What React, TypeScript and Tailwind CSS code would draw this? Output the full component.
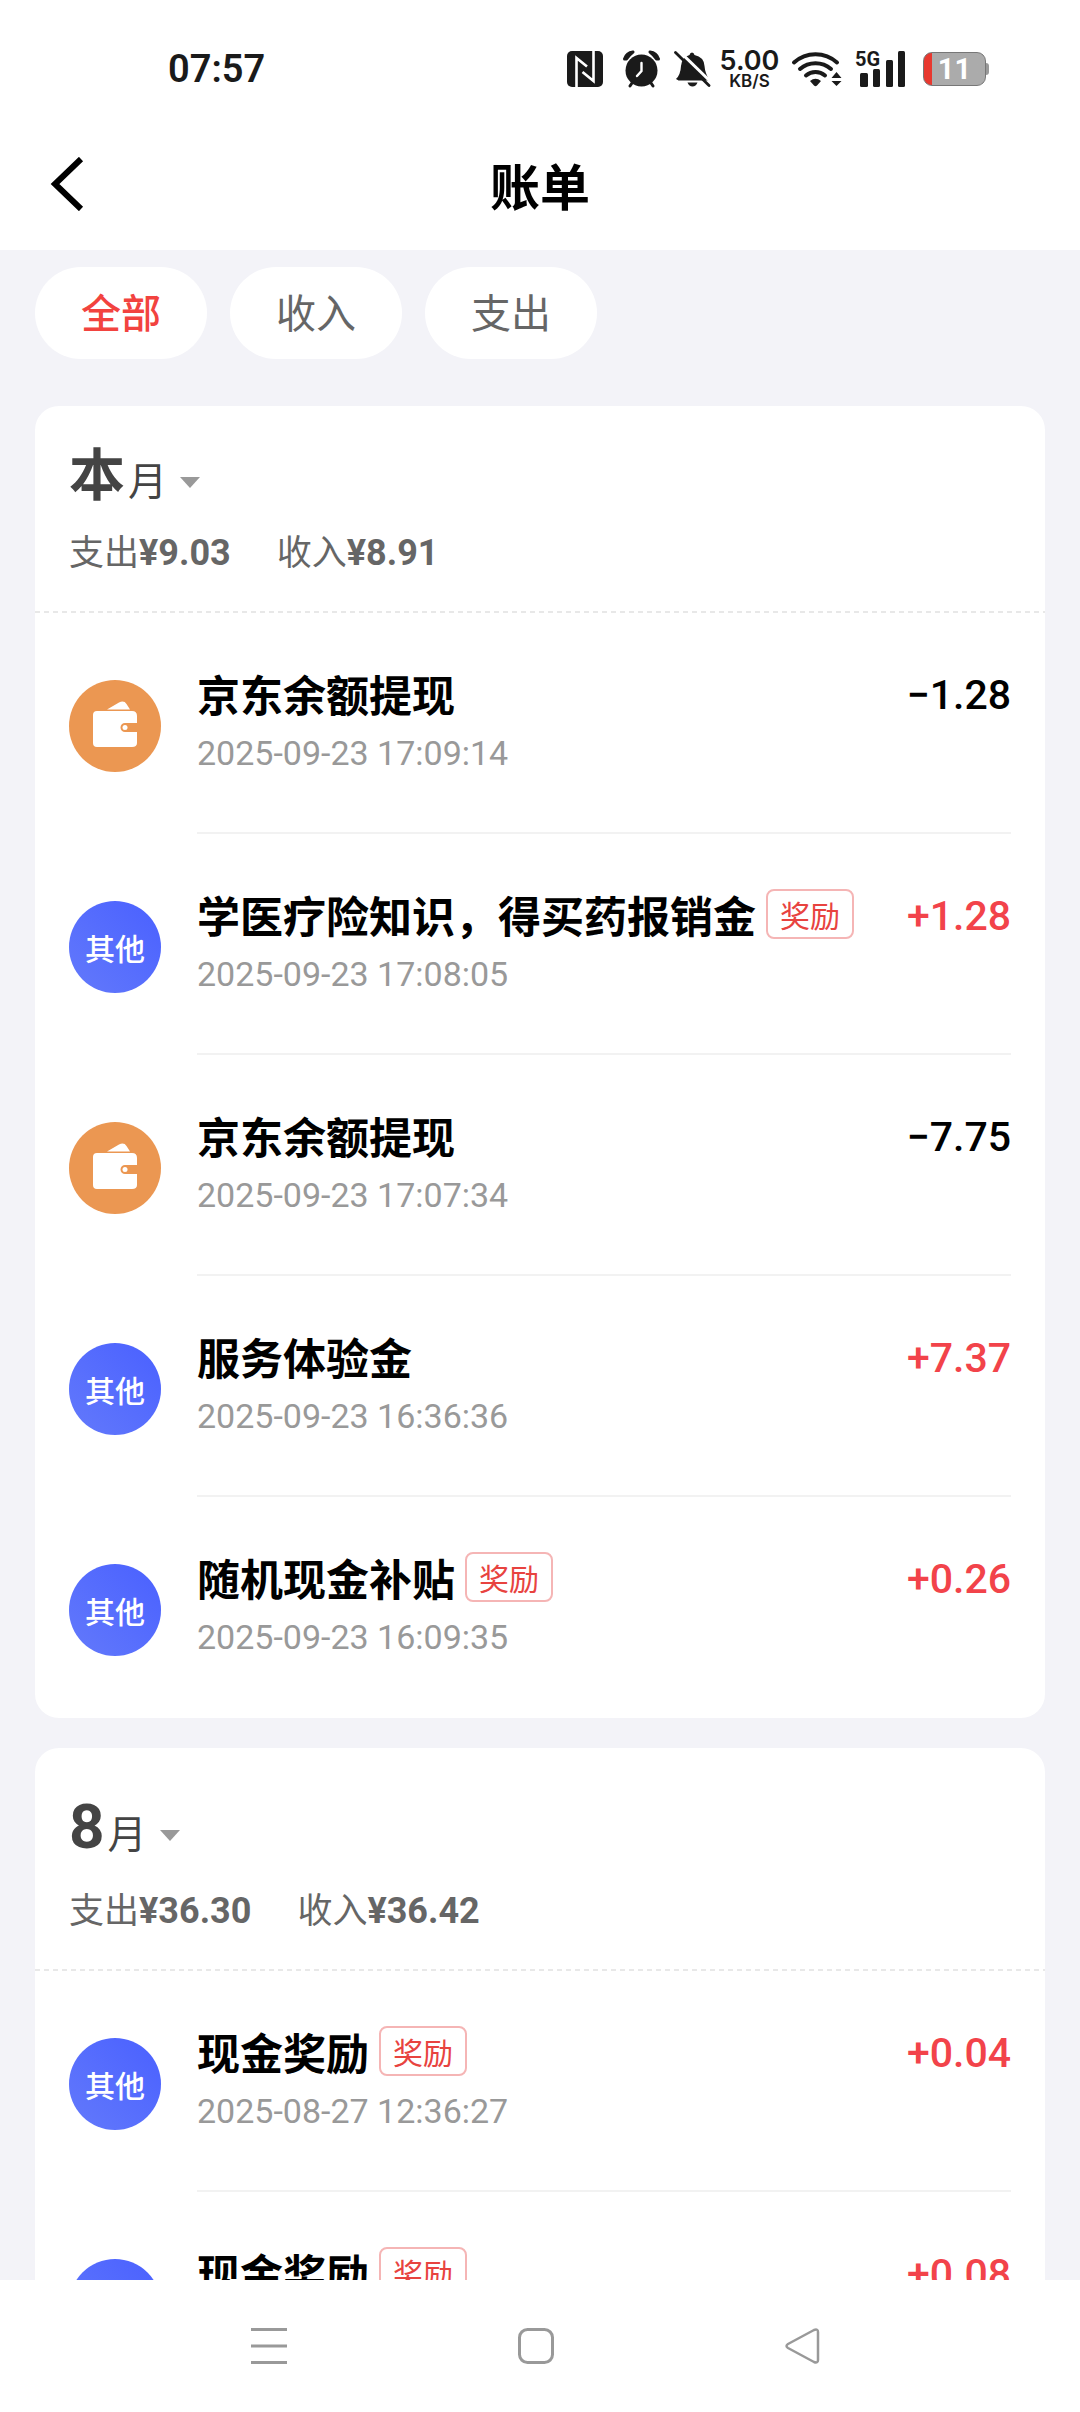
import { useState } from "react";
import clsx from "clsx";

type Bill = {
	title: string;
	time: string;
	amount: string;
	kind: "wallet" | "other";
	reward?: boolean;
};

type Month = {
	name: string;
	spent: string;
	earned: string;
	current?: boolean;
	bills: Bill[];
};

const tabs = ["全部", "收入", "支出"];

const months: Month[] = [
	{
		name: "本",
		spent: "¥9.03",
		earned: "¥8.91",
		current: true,
		bills: [
			{
				title: "京东余额提现",
				time: "2025-09-23 17:09:14",
				amount: "−1.28",
				kind: "wallet",
			},
			{
				title: "学医疗险知识，得买药报销金",
				time: "2025-09-23 17:08:05",
				amount: "+1.28",
				kind: "other",
				reward: true,
			},
			{
				title: "京东余额提现",
				time: "2025-09-23 17:07:34",
				amount: "−7.75",
				kind: "wallet",
			},
			{
				title: "服务体验金",
				time: "2025-09-23 16:36:36",
				amount: "+7.37",
				kind: "other",
			},
			{
				title: "随机现金补贴",
				time: "2025-09-23 16:09:35",
				amount: "+0.26",
				kind: "other",
				reward: true,
			},
		],
	},
	{
		name: "8",
		spent: "¥36.30",
		earned: "¥36.42",
		bills: [
			{
				title: "现金奖励",
				time: "2025-08-27 12:36:27",
				amount: "+0.04",
				kind: "other",
				reward: true,
			},
			{
				title: "现金奖励",
				time: "2025-08-27 12:36:20",
				amount: "+0.08",
				kind: "other",
				reward: true,
			},
		],
	},
];

function StatusBar() {
	return (
		<div className="flex h-[138px] items-center justify-between pl-[168px] pr-[91px] text-[#1a1a1a]">
			<span className="font-['Roboto',sans-serif] text-[38px] leading-none font-semibold">
				07:57
			</span>
			<div className="flex items-center">
				{/* NFC */}
				<svg className="h-9 w-9" viewBox="0 0 36 36">
					<rect width="36" height="36" rx="5" fill="#1a1a1a" />
					<path
						d="M9.500 36V7L20 15.500M26.500 0v30L15.500 21"
						fill="none"
						stroke="#fff"
						strokeWidth="2.600"
					/>
				</svg>
				{/* Alarm */}
				<svg className="ml-5 h-[38px] w-[37px]" viewBox="0 0 37 38">
					<circle cx="18.500" cy="20.500" r="16" fill="#1a1a1a" />
					<path
						d="M1.500 9A10 10 0 0 1 10 2Q6 5 3.500 9ZM35.500 9A10 10 0 0 0 27 2Q31 5 33.500 9ZM9 33l-2 3M28 33l2 3"
						fill="#1a1a1a"
						stroke="#1a1a1a"
						strokeWidth="3"
						strokeLinejoin="round"
						strokeLinecap="round"
					/>
					<path
						d="M18.500 13v8l-4.500 5"
						fill="none"
						stroke="#fff"
						strokeWidth="2.400"
						strokeLinecap="round"
					/>
				</svg>
				{/* Muted bell */}
				<svg className="ml-[14px] h-9 w-[37px]" viewBox="0 0 37 36">
					<path
						d="M18 1.500q2 0 2.500 2.500Q30 6 30.500 15q.5 7 5 14.500H4.500l-2.500-1.500q4.500-4 5-13Q8 6 15.500 4 16 1.500 18 1.500Z"
						fill="#1a1a1a"
					/>
					<path d="M13.500 31.500h10q-1.500 4-5 4t-5-4Z" fill="#1a1a1a" />
					<path d="M3-2 38 32" stroke="#fff" strokeWidth="3" />
					<path
						d="M1.500 1.500 35 34.500"
						stroke="#1a1a1a"
						strokeWidth="2.800"
						strokeLinecap="round"
					/>
				</svg>
				<div className="ml-[9px] flex w-[59px] flex-col items-center font-['Inter',sans-serif] font-semibold">
					<span className="text-[27px] leading-[24px]">5.00</span>
					<span className="text-[17px] leading-4">KB/S</span>
				</div>
				{/* Wi-Fi */}
				<svg className="ml-3 h-9 w-[52px]" viewBox="0 0 52 36">
					<g
						fill="none"
						stroke="#1a1a1a"
						strokeWidth="4"
						strokeLinecap="round"
					>
						<path d="M3 11.500a32 32 0 0 1 43 0" />
						<path d="M9 18a23.500 23.500 0 0 1 31 0" />
						<path d="M15 24.500a14.500 14.500 0 0 1 19 0" />
					</g>
					<path
						d="M19 30q5.500-4.500 11 0l-4 4.500q-1.500 1.500-3 0ZM45.500 21l5 6h-10ZM45.500 35l5-5h-10Z"
						fill="#1a1a1a"
					/>
				</svg>
				{/* Signal */}
				<div className="relative ml-3 h-9 w-[52px]">
					<span className="absolute left-0 top-0 font-['Roboto',sans-serif] text-[20px] leading-4 font-bold">
						5G
					</span>
					<svg className="h-9 w-[52px]" viewBox="0 0 52 36" fill="#1a1a1a">
						<rect x="5" y="22" width="8" height="14" rx="1.500" />
						<rect x="18" y="18" width="7" height="18" rx="1.500" />
						<rect x="31" y="9" width="7" height="27" rx="1.500" />
						<rect x="43" y="0" width="7" height="36" rx="1.500" />
					</svg>
				</div>
				{/* Battery */}
				<div className="ml-4 flex items-center">
					<div className="flex h-[34px] w-[63px] items-center justify-center overflow-hidden rounded-[9px] border border-[#777] bg-gradient-to-r from-[#e8382f] from-[8px] to-[#ababab] to-[8px] font-['Roboto',sans-serif] text-[29px] leading-none font-bold text-white">
						11
					</div>
					<div className="h-3 w-[3px] rounded-r-sm bg-[#999]" />
				</div>
			</div>
		</div>
	);
}

function Header() {
	return (
		<header className="grid h-[112px] grid-cols-3 items-center px-[50px] pb-[20px]">
			<button type="button" aria-label="返回" className="w-9">
				<svg className="h-[54px] w-9" viewBox="0 0 36 54">
					<path
						d="M31 2 5 27l26 25"
						fill="none"
						stroke="#000"
						strokeWidth="6"
					/>
				</svg>
			</button>
			<h1 className="text-center text-[50px] leading-none font-bold">账单</h1>
		</header>
	);
}

function BillIcon({ kind }: { kind: Bill["kind"] }) {
	if (kind === "other") {
		return (
			<div className="mt-[67px] flex size-[92px] shrink-0 items-center justify-center rounded-full bg-gradient-to-tr from-[#6379fb] to-[#4a60ff] text-[30px] font-medium text-white">
				其他
			</div>
		);
	}
	return (
		<svg
			className="mt-[67px] size-[92px] shrink-0"
			viewBox="0 0 92 92"
			fill="#fff"
		>
			<circle cx="46" cy="46" r="46" fill="#eb9752" />
			<path d="M38 29.500 50 22.500q5-2.500 7.500 1.500l3.500 5.500Z" />
			<path d="M28 31h35q5 0 5 5v7H56a4.500 4.500 0 0 0 0 9h12v11q0 4-5 4H28q-4 0-4-4V35q0-4 4-4Z" />
			<circle cx="56" cy="47.500" r="2.500" />
		</svg>
	);
}

function BillRow({ bill, last }: { bill: Bill; last: boolean }) {
	return (
		<li className="flex gap-9 px-[34px]">
			<BillIcon kind={bill.kind} />
			<div
				className={clsx(
					"flex h-[221px] flex-1 items-start justify-between border-b-2 pt-[55px]",
					last ? "border-transparent" : "border-[#f2f2f2]",
				)}
			>
				<div>
					<div className="flex h-[50px] items-center gap-[10px]">
						<h3 className="text-[43px] leading-[50px] font-bold">
							{bill.title}
						</h3>
						{bill.reward && (
							<span className="rounded-lg border-2 border-[#f5b5b5] px-3 text-[30px] leading-[46px] text-[#e8433f]">
								奖励
							</span>
						)}
					</div>
					<time className="mt-[15px] block font-['Roboto',sans-serif] text-[34px] leading-10 text-[#999]">
						{bill.time}
					</time>
				</div>
				<span
					className={clsx(
						"font-['Roboto',sans-serif] text-[41px] leading-[54px] font-medium",
						bill.amount.startsWith("+") ? "text-[#f2434a]" : "text-black",
					)}
				>
					{bill.amount}
				</span>
			</div>
		</li>
	);
}

function MonthCard({ month }: { month: Month }) {
	return (
		<section className="rounded-3xl bg-white">
			<div
				className={clsx(
					"px-[34px]",
					month.current ? "h-[205px] pt-[34px]" : "h-[221px] pt-[43px]",
				)}
			>
				<button
					type="button"
					className="flex h-[72px] items-baseline text-[#444]"
				>
					<span
						className={clsx(
							"font-['Roboto','Noto_Sans_CJK_SC',sans-serif] leading-[72px] font-bold",
							month.current ? "text-[56px]" : "text-[62px]",
						)}
					>
						{month.name}
					</span>
					<span className="ml-[3px] text-[39px] leading-[72px]">月</span>
					<svg className="ml-[13px] h-[22px] w-5" viewBox="0 0 20 22">
						<path d="M0 4h20L10 15Z" fill="#999" />
					</svg>
				</button>
				<dl
					className={clsx(
						"flex gap-[46px] text-[35px] leading-10 text-[#666]",
						month.current ? "mt-[18px]" : "mt-[25px]",
					)}
				>
					<div className="flex items-baseline">
						<dt>支出</dt>
						<dd className="font-['Roboto',sans-serif] text-[36px] font-bold">
							{month.spent}
						</dd>
					</div>
					<div className="flex items-baseline">
						<dt>收入</dt>
						<dd className="font-['Roboto',sans-serif] text-[36px] font-bold">
							{month.earned}
						</dd>
					</div>
				</dl>
			</div>
			<div className="h-[2px] bg-[repeating-linear-gradient(90deg,#e8e8e8_0_5px,transparent_5px_9px)]" />
			<ul>
				{month.bills.map((bill, i) => (
					<BillRow
						key={i}
						bill={bill}
						last={i === month.bills.length - 1}
					/>
				))}
			</ul>
		</section>
	);
}

function SystemNav() {
	return (
		<nav className="flex h-[132px] shrink-0 items-center justify-between bg-white pl-[251px] pr-[259px]">
			<button type="button" aria-label="最近任务">
				<svg className="size-9" viewBox="0 0 36 36">
					<path d="M0 1.500h36M0 18h36M0 34.500h36" stroke="#999" strokeWidth="3" />
				</svg>
			</button>
			<button type="button" aria-label="主屏幕">
				<svg className="size-9" viewBox="0 0 36 36">
					<rect
						x="1.500"
						y="1.500"
						width="33"
						height="33"
						rx="8"
						fill="none"
						stroke="#999"
						strokeWidth="3"
					/>
				</svg>
			</button>
			<button type="button" aria-label="返回上一页">
				<svg className="size-9" viewBox="0 0 36 36">
					<path
						d="M3 16 29 2q4-1.500 4 2v28q0 3.500-4 2L3 20q-3-2 0-4Z"
						fill="none"
						stroke="#999"
						strokeWidth="2.500"
						strokeLinejoin="round"
					/>
				</svg>
			</button>
		</nav>
	);
}

export default function App() {
	const [active, setActive] = useState("全部");

	return (
		<div className="flex h-screen flex-col bg-[#f3f3f8] font-['Noto_Sans_CJK_SC',sans-serif] text-black">
			<div className="shrink-0 bg-white">
				<StatusBar />
				<Header />
			</div>
			<main className="min-h-0 flex-1 overflow-hidden px-[35px] pt-[17px]">
				<div className="flex gap-[23px]">
					{tabs.map((tab) => (
						<button
							key={tab}
							type="button"
							onClick={() => setActive(tab)}
							className={clsx(
								"h-[92px] rounded-full bg-white px-[46px] pb-1 text-[40px]",
								tab === active
									? "font-medium text-[#f2433f]"
									: "text-[#666]",
							)}
						>
							{tab}
						</button>
					))}
				</div>
				<div className="mt-[47px] flex flex-col gap-[30px]">
					{months.map((month) => (
						<MonthCard key={month.name} month={month} />
					))}
				</div>
			</main>
			<SystemNav />
		</div>
	);
}
